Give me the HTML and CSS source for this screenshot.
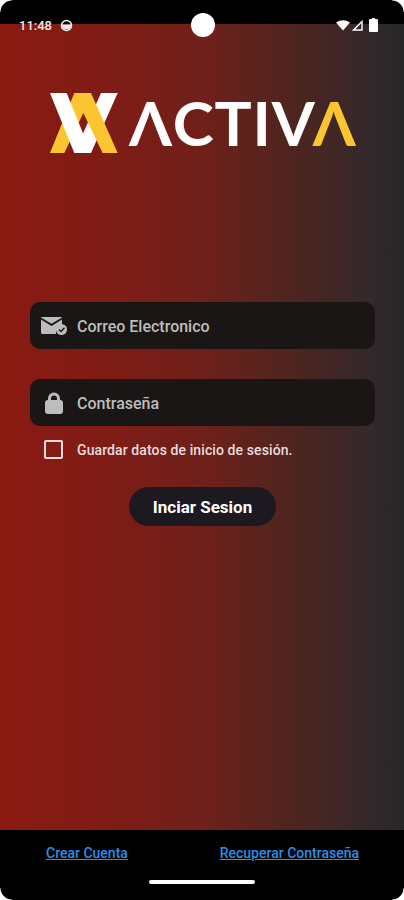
FILE: index.html
```html
<!DOCTYPE html>
<html lang="es">

<head>
    <meta charset="UTF-8">
    <meta name="viewport" content="width=device-width, initial-scale=1.0">
    <title>Activa - Iniciar Sesion</title>
    <link rel="stylesheet" href="styles.css">
</head>

<body>
    <div class="phone">
        <div class="status-top"></div>
        <div class="status-bar">
            <div class="status-left">
                <span class="status-time">11:48</span>
                <svg class="status-app" width="13" height="13" viewBox="0 0 13 13">
                    <circle cx="6.5" cy="6.5" r="5" fill="none" stroke="#eee" stroke-width="1.6" />
                    <path d="M1.500 5.500h10a5 5 0 0 1-10 0z" fill="#eee" />
                </svg>
            </div>
            <div class="status-camera"></div>
            <div class="status-right">
                <svg class="status-wifi" width="14" height="11" viewBox="0 0 14 11">
                    <path d="M0 2.500Q7-2 14 2.500L7 10.500z" fill="#fff" />
                </svg>
                <svg class="status-signal" width="11" height="11" viewBox="0 0 11 11">
                    <path d="M10 1.500V10H1.500z" fill="none" stroke="#fff" stroke-width="1.400" />
                </svg>
                <svg class="status-battery" width="9" height="14" viewBox="0 0 9 14">
                    <path d="M3 0h3v1H8a1 1 0 0 1 1 1v11a1 1 0 0 1-1 1H1a1 1 0 0 1-1-1V2a1 1 0 0 1 1-1h2z" fill="#fff" />
                </svg>
            </div>
        </div>

        <main class="login">
            <div class="logo">
                <svg class="logo-mark" width="76" height="72" viewBox="0 0 228 216">
                    <path d="M165 15H215L135 195H85z" fill="#fff" />
                    <path d="M85 15H135L215 195H170L112 75 55 195H12z" fill="#fbc531" />
                    <path d="M12 15H62L135 195H85z" fill="#fff" />
                </svg>
                <span class="logo-text">ΛCTIV<span class="logo-accent">Λ</span></span>
            </div>

            <form class="login-form">
                <div class="field field-mail">
                    <svg class="field-icon" width="26" height="18" viewBox="0 0 26 18">
                        <path d="M0 2.500 10.500 9 21 2.500V9a6.500 6.500 0 0 0-6 8H1.500A1.500 1.500 0 0 1 0 15.500z" fill="#bdbdbd" />
                        <path d="M1 0H20a1 1 0 0 1 1 .6L10.500 6.800 0 .6A1 1 0 0 1 1 0z" fill="#bdbdbd" />
                        <circle cx="20.500" cy="12.500" r="5.500" fill="#bdbdbd" />
                        <path d="M18 12.500 20 14.500 23.500 10.800" fill="none" stroke="#1a1616" stroke-width="1.400" />
                    </svg>
                    <span>Correo Electronico</span>
                </div>
                <div class="field field-pass">
                    <svg class="field-icon" width="26" height="22" viewBox="0 0 26 22">
                        <path d="M8.500 9V6.500a4.500 4.500 0 0 1 9 0V9" fill="none" stroke="#bdbdbd" stroke-width="3" />
                        <rect x="4" y="8" width="18" height="14" rx="3" fill="#bdbdbd" />
                    </svg>
                    <span>Contraseña</span>
                </div>
                <label class="remember">
                    <span class="remember-box"></span>
                    <span>Guardar datos de inicio de sesión.</span>
                </label>
                <button class="btn" type="button">Inciar Sesion</button>
            </form>
        </main>

        <footer class="footer">
            <div class="footer-links">
                <a href="#">Crear Cuenta</a>
                <a href="#">Recuperar Contraseña</a>
            </div>
            <div class="home-bar"></div>
        </footer>
        <div class="corner corner-tl"></div>
        <div class="corner corner-tr"></div>
        <div class="corner corner-bl"></div>
        <div class="corner corner-br"></div>
    </div>
</body>

</html>
```

FILE: styles.css
```css
html, body {
    margin: 0;
    padding: 0;
    background: #000;
}

.phone {
    position: relative;
    display: flex;
    flex-direction: column;
    width: 404px;
    height: 900px;
    overflow: hidden;
    font-family: Roboto, "Liberation Sans", sans-serif;
    background: #000;
}

.status-top {
    height: 24px;
    background: #000;
}

.status-bar {
    position: absolute;
    top: 12px;
    left: 0;
    right: 0;
    height: 26px;
    display: flex;
    align-items: center;
    justify-content: space-between;
    padding: 0 26px 0 19px;
}

.status-left {
    display: flex;
    align-items: center;
    gap: 8px;
    color: #eee;
    font-size: 13px;
    font-weight: 500;
}

.status-camera {
    position: absolute;
    left: 191px;
    top: 1px;
    width: 24px;
    height: 24px;
    border-radius: 50%;
    background: #fff;
}

.status-right {
    display: flex;
    align-items: center;
}

.status-signal {
    margin: 0 6px 0 2px;
}

.login {
    flex: 1;
    background: linear-gradient(to right, #8a1a12 0%, #801c15 25%, #6f2019 50%, #4c2520 74%, #33282a 92%, #262626 100%);
}

.logo {
    display: flex;
    align-items: center;
    gap: 7px;
    padding: 64px 0 0 46px;
}

.logo-text {
    margin-top: -5px;
    color: #fff;
    font-family: Lato, sans-serif;
    font-size: 62px;
    font-weight: 700;
    line-height: 66px;
    letter-spacing: .8px;
}

.logo-accent {
    margin-left: -3px;
    color: #fbc531;
}

.login-form {
    display: flex;
    flex-direction: column;
    padding: 142px 29px 0 30px;
}

.field {
    display: flex;
    align-items: center;
    gap: 10px;
    height: 47px;
    margin-bottom: 30px;
    padding-left: 11px;
    border-radius: 10px;
    background: #1a1616;
    color: #bdbdbd;
    font-size: 16px;
    font-weight: 500;
}

.field span {
    padding-top: 1px;
}

.field-pass {
    margin-bottom: 0;
}

.remember {
    display: flex;
    align-items: center;
    gap: 14px;
    margin-top: 14px;
    padding-left: 14px;
    color: #e8dcdc;
    font-size: 14px;
    font-weight: 500;
    letter-spacing: .1px;
}

.remember-box {
    width: 15px;
    height: 15px;
    border: 2px solid #f0dcdc;
    border-radius: 2px;
}

.btn {
    align-self: center;
    width: 147px;
    height: 39px;
    margin-top: 28px;
    border: none;
    border-radius: 20px;
    background: #1c1a20;
    color: #fff;
    font-family: inherit;
    font-size: 17px;
    font-weight: 700;
}

.footer {
    height: 70px;
    background: #000;
}

.footer-links {
    display: flex;
    justify-content: space-between;
    padding: 15px 45px 0 46px;
}

.footer-links a {
    color: #2a8fe8;
    font-size: 14px;
    font-weight: 500;
}

.home-bar {
    width: 106px;
    height: 4px;
    margin: 19px auto 0;
    border-radius: 2px;
    background: #fff;
}

/* esquinas blancas de la captura */
.corner {
    position: absolute;
    width: 12px;
    height: 12px;
    background: radial-gradient(circle at var(--cx) var(--cy), transparent 11px, #fff 12px);
}

.corner-tl { top: 0; left: 0; --cx: 100%; --cy: 100%; }
.corner-tr { top: 0; right: 0; --cx: 0%; --cy: 100%; }
.corner-bl { bottom: 0; left: 0; --cx: 100%; --cy: 0%; }
.corner-br { bottom: 0; right: 0; --cx: 0%; --cy: 0%; }
```
